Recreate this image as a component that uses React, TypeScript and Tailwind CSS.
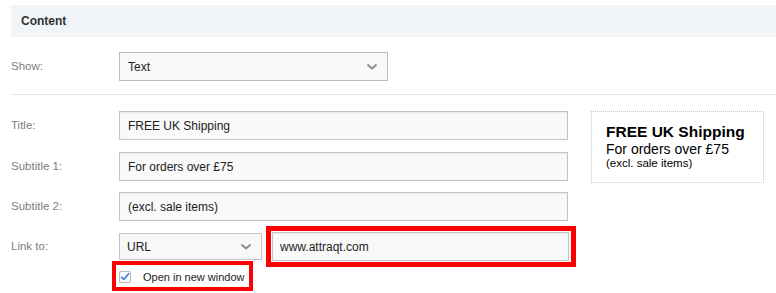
import React from 'react';

const FONT = { fontFamily: '"Liberation Sans", Arial, sans-serif' };

function Chevron() {
  return (
    <svg className="w-[10px] h-[6px]" viewBox="0 0 10 6" fill="none">
      <path d="M1 1l4 3.5L9 1" stroke="#8a8a8a" strokeWidth={1.8} strokeLinecap="round" strokeLinejoin="round" />
    </svg>
  );
}

function Field({ value }: { value: string }) {
  return (
    <div className="h-[29px] w-[449px] flex items-center px-[8px] bg-[#f9f9f9] border border-[#c4c4c4] shadow-[inset_0_1px_2px_rgba(0,0,0,0.07)] text-[12px] text-[#222]">
      {value}
    </div>
  );
}

function Row({ label, children }: { label: string; children: React.ReactNode }) {
  return (
    <div className="flex items-center">
      <div className="w-[108px] shrink-0 text-[11.5px] text-[#7d7d7d]">{label}</div>
      {children}
    </div>
  );
}

export default function App() {
  return (
    <div className="w-[776px] h-[293px] overflow-hidden bg-white pl-[11px] pt-[5px]" style={FONT}>
      {/* section header */}
      <div className="h-[32px] bg-[#f1f5f8] flex items-center pl-[10px] text-[12px] font-bold text-[#333]">
        Content
      </div>

      <div className="mt-[15px]">
        <Row label="Show:">
          <div className="h-[29px] w-[269px] flex items-center justify-between pl-[8px] pr-[10px] bg-[#f8f8f8] border border-[#bdbdbd] text-[12px] text-[#222]">
            <span>Text</span>
            <Chevron />
          </div>
        </Row>
      </div>

      <div className="mt-[13px] border-t border-[#e6e6e6]" />

      <div className="mt-[16px] flex items-start">
        <div className="w-[557px] shrink-0">
          <Row label="Title:">
            <Field value="FREE UK Shipping" />
          </Row>
          <div className="mt-[12px]">
            <Row label="Subtitle 1:">
              <Field value="For orders over £75" />
            </Row>
          </div>
          <div className="mt-[11px]">
            <Row label="Subtitle 2:">
              <Field value="(excl. sale items)" />
            </Row>
          </div>

          <div className="mt-[5px]">
            <Row label="Link to:">
              <div className="h-[27px] w-[143px] shrink-0 flex items-center justify-between pl-[7px] pr-[10px] bg-[#f8f8f8] border border-[#c4c4c4] text-[12px] text-[#222]">
                <span>URL</span>
                <Chevron />
              </div>
              <div className="ml-[4px] shrink-0 w-[310px] border-[5px] border-[#f00] pl-[1px] pr-[2px] py-[1px]">
                <div className="h-[29px] flex items-center px-[7px] bg-[#f9f9f9] border border-[#c4c4c4] shadow-[inset_0_1px_2px_rgba(0,0,0,0.07)] text-[12px] text-[#222]">
                  www.attraqt.com
                </div>
              </div>
            </Row>
          </div>

          <div className="-mt-[6px] ml-[101px] w-[141px] border-4 border-[#f00] pl-[3px] pt-[6px] pb-[4px] flex items-center">
            <div className="w-[12px] h-[12px] shrink-0 border border-[#b9b9b9] rounded-[2px] bg-[#fbfbfb] flex items-center justify-center">
              <svg className="w-[10px] h-[10px]" viewBox="0 0 10 10" fill="none">
                <path d="M1.5 5.2l2.3 2.3L8.6 1.8" stroke="#3b7bdc" strokeWidth={1.6} strokeLinecap="round" strokeLinejoin="round" />
              </svg>
            </div>
            <span className="ml-[12px] text-[11px] text-[#222] whitespace-nowrap leading-[12px]">Open in new window</span>
          </div>
        </div>

        {/* preview */}
        <div className="ml-[23px] w-[173px] h-[72px] border border-dotted border-[#c8c8c8] pl-[14px] pt-[11px]">
          <div className="text-[15.5px] leading-[18px] font-bold text-black">FREE UK Shipping</div>
          <div className="text-[14px] leading-[16px] text-black">For orders over £75</div>
          <div className="text-[11.5px] leading-[13px] text-black">(excl. sale items)</div>
        </div>
      </div>
    </div>
  );
}
